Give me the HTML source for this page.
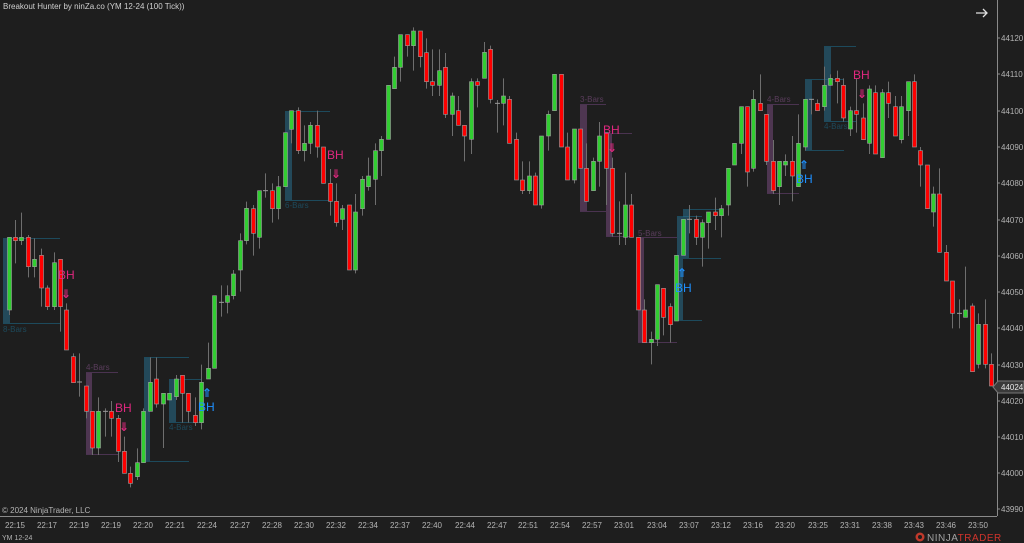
<!DOCTYPE html>
<html><head><meta charset="utf-8">
<style>
html,body{margin:0;padding:0;background:#1e1e1e;}
body{width:1024px;height:543px;overflow:hidden;position:relative;font-family:"Liberation Sans",sans-serif;}
svg{position:absolute;left:0;top:0;}
</style></head>
<body>
<svg id="c" width="1024" height="543" xmlns="http://www.w3.org/2000/svg" font-family="Liberation Sans, sans-serif">
<rect width="1024" height="543" fill="#1e1e1e"/>
<g id="ov"></g>
<g id="cd"></g>
<line x1="997.5" y1="0" x2="997.5" y2="516" stroke="#8a8a8a" stroke-width="1"/>
<line x1="0" y1="516.5" x2="997" y2="516.5" stroke="#8a8a8a" stroke-width="1"/>
<g font-size="8" fill="#b4b4b4">
<text x="1001" y="41">44120</text><text x="1001" y="77">44110</text><text x="1001" y="114">44100</text>
<text x="1001" y="150">44090</text><text x="1001" y="186">44080</text><text x="1001" y="223">44070</text>
<text x="1001" y="259">44060</text><text x="1001" y="295">44050</text><text x="1001" y="331">44040</text>
<text x="1001" y="368">44030</text><text x="1001" y="404">44020</text><text x="1001" y="440">44010</text>
<text x="1001" y="476">44000</text><text x="1001" y="512">43990</text>
</g>
<g stroke="#8a8a8a"><line x1="997" y1="38" x2="1000" y2="38"/><line x1="997" y1="74" x2="1000" y2="74"/><line x1="997" y1="111" x2="1000" y2="111"/><line x1="997" y1="147" x2="1000" y2="147"/><line x1="997" y1="183" x2="1000" y2="183"/><line x1="997" y1="220" x2="1000" y2="220"/><line x1="997" y1="256" x2="1000" y2="256"/><line x1="997" y1="292" x2="1000" y2="292"/><line x1="997" y1="328" x2="1000" y2="328"/><line x1="997" y1="365" x2="1000" y2="365"/><line x1="997" y1="401" x2="1000" y2="401"/><line x1="997" y1="437" x2="1000" y2="437"/><line x1="997" y1="473" x2="1000" y2="473"/><line x1="997" y1="509" x2="1000" y2="509"/></g>
<path d="M993 387 L998 381 L1024 381 L1024 393 L998 393 Z" fill="#3a3a3a" stroke="#777"/>
<text x="1001" y="390" font-size="8" fill="#e8e8e8">44024</text>
<g font-size="8" fill="#b4b4b4" text-anchor="middle">
<text x="15" y="528">22:15</text><text x="47" y="528">22:17</text><text x="79" y="528">22:19</text><text x="111" y="528">22:19</text><text x="143" y="528">22:20</text><text x="175" y="528">22:21</text><text x="207" y="528">22:24</text><text x="240" y="528">22:27</text><text x="272" y="528">22:28</text><text x="304" y="528">22:30</text><text x="336" y="528">22:32</text><text x="368" y="528">22:34</text><text x="400" y="528">22:37</text><text x="432" y="528">22:40</text><text x="465" y="528">22:44</text><text x="497" y="528">22:47</text><text x="528" y="528">22:51</text><text x="560" y="528">22:54</text><text x="592" y="528">22:57</text><text x="624" y="528">23:01</text><text x="657" y="528">23:04</text><text x="689" y="528">23:07</text><text x="721" y="528">23:12</text><text x="753" y="528">23:16</text><text x="785" y="528">23:20</text><text x="818" y="528">23:25</text><text x="850" y="528">23:31</text><text x="882" y="528">23:38</text><text x="914" y="528">23:43</text><text x="946" y="528">23:46</text><text x="978" y="528">23:50</text>
</g>
<text x="3" y="9" font-size="8" fill="#d0d0d0">Breakout Hunter by ninZa.co (YM 12-24 (100 Tick))</text>
<text x="2" y="513" font-size="8" fill="#b4b4b4">© 2024 NinjaTrader, LLC</text>
<text x="2" y="540" font-size="7" fill="#b4b4b4">YM 12-24</text>
<path d="M976 13 H987 M983 9 L987 13 L983 17" stroke="#e0e0e0" stroke-width="1.3" fill="none"/>
<circle cx="920" cy="537" r="4.5" fill="#c0392b"/><circle cx="920" cy="537" r="2" fill="#1e1e1e"/>
<text x="927" y="541" font-size="10" fill="#a0a0a0" letter-spacing="0.5">NINJA<tspan fill="#d0342c">TRADER</tspan></text>
<g font-size="8" fill="#1d4a5c"><text x="3" y="332">8-Bars</text><text x="169" y="430">4-Bars</text><text x="285" y="208">6-Bars</text><text x="824" y="129">4-Bars</text></g>
<g font-size="8" fill="#5a3d5c"><text x="86" y="370">4-Bars</text><text x="580" y="102">3-Bars</text><text x="638" y="236">5-Bars</text><text x="767" y="102">4-Bars</text></g>
<g font-size="12" fill="#e0287f"><text x="58" y="279">BH</text><text x="115" y="412">BH</text><text x="327" y="159">BH</text><text x="603" y="134">BH</text><text x="853" y="79">BH</text></g>
<g font-size="12" font-weight="bold" fill="#e0287f" text-anchor="middle" font-family="DejaVu Sans, sans-serif"><text x="66" y="298">⇓</text><text x="124" y="431">⇓</text><text x="336" y="178">⇓</text><text x="612" y="152">⇓</text><text x="862" y="98">⇓</text></g>
<g font-size="12" fill="#1e90ff"><text x="198" y="411">BH</text><text x="675" y="292">BH</text><text x="796" y="183">BH</text></g>
<g font-size="12" font-weight="bold" fill="#1e90ff" text-anchor="middle" font-family="DejaVu Sans, sans-serif"><text x="207" y="397">⇑</text><text x="682" y="277">⇑</text><text x="804" y="169">⇑</text></g>
</svg>
<script>
var NS="http://www.w3.org/2000/svg";
function el(p,t,a){var e=document.createElementNS(NS,t);for(var k in a)e.setAttribute(k,a[k]);p.appendChild(e);return e;}
var ov=document.getElementById('ov');
function box(x1,x2,y1,y2,xe,col,fill){el(ov,'rect',{x:x1,y:y1,width:x2-x1,height:y2-y1,fill:fill});
el(ov,'line',{x1:x1,y1:y1+0.5,x2:xe,y2:y1+0.5,stroke:col});el(ov,'line',{x1:x1,y1:y2-0.5,x2:xe,y2:y2-0.5,stroke:col});}
var T='#1d4a5c',TF='rgba(40,110,140,0.55)',P='#4a3350',PF='rgba(110,70,115,0.6)';
box(3,10,238,324,60,T,TF);box(86,92,372,455,118,P,PF);box(144,150,357,462,189,T,TF);box(169,176,379,423,201,T,TF);
box(285,292,111,201,330,T,TF);box(580,587,104,212,606,P,PF);box(606,612,133,237,632,P,PF);box(638,644,237,343,677,P,PF);
box(677,683,216,321,702,T,TF);box(683,689,209,259,721,T,TF);box(767,773,104,194,799,P,PF);box(805,812,79,151,844,T,TF);box(824,831,46,122,856,T,TF);
var D=[[0,[[26,652,870,652,885,'G'],[45,652,662,600,730,'R'],[64,652,662,578,675,'G'],[84,652,740,645,772,'R'],[103,718,740,655,772,'G'],[122,706,804,686,860,'R'],[142,804,860,796,870,'R'],[161,728,860,697,870,'G'],[180,718,860,718,935,'R'],[199,870,990,850,990,'R'],[219,1010,1088,1000,1088,'R'],[238,1086,1086,1000,1130,'D'],[257,1098,1174,1098,1195,'R'],[276,1174,1284,1174,1305,'R'],[295,1174,1284,1132,1305,'G'],[314,1174,1174,1165,1250,'D'],[334,1174,1195,1143,1250,'R'],[353,1195,1294,1185,1326,'R'],[372,1294,1360,1250,1360,'R'],[391,1360,1390,1340,1402,'R'],[411,1328,1370,1285,1380,'G'],[430,1174,1328,1165,1328,'G'],[449,1087,1174,1012,1174,'G'],[469,1077,1152,1012,1163,'R'],[488,1120,1152,1120,1284,'G'],[507,1120,1140,1120,1140,'G'],[527,1077,1130,1065,1140,'G'],[546,1066,1120,1066,1208,'R'],[565,1120,1174,1120,1208,'R'],[585,1186,1208,1132,1218,'R'],[604,1087,1208,1034,1228,'G'],[623,1045,1077,968,1077,'G'],[643,827,1045,827,1045,'G'],[662,847,847,796,890,'D'],[681,827,847,796,880,'G'],[700,762,827,750,838,'G'],[720,662,750,640,815,'G'],[739,565,662,545,673,'G']]],
[250,[[8,566,640,555,707,'R'],[27,512,652,512,686,'G'],[46,512,512,460,533,'D'],[65,512,566,490,608,'R'],[85,500,566,468,598,'G'],[104,338,500,338,500,'G'],[123,272,328,272,370,'G'],[143,272,392,262,402,'R'],[162,370,392,316,424,'G'],[181,316,370,306,402,'G'],[200,316,381,272,413,'R'],[220,381,490,381,490,'R'],[239,490,544,447,587,'R'],[258,544,608,490,620,'R'],[277,566,598,555,630,'G'],[297,555,750,555,750,'R'],[316,576,750,522,760,'G'],[335,478,566,468,587,'G'],[355,468,500,413,512,'G'],[374,392,478,370,555,'G'],[393,358,392,348,468,'G'],[413,196,358,196,358,'G'],[432,142,206,110,206,'G'],[451,44,142,44,185,'G'],[470,44,77,44,110,'R'],[490,33,77,22,152,'G'],[509,33,110,33,142,'R'],[528,98,185,55,206,'R'],[547,185,196,88,228,'R'],[567,152,196,88,228,'G'],[586,142,283,99,294,'R'],[605,228,283,218,348,'G'],[624,272,316,228,316,'R'],[643,316,348,316,424,'R'],[663,185,358,175,402,'G'],[682,185,196,175,262,'R'],[701,97,175,66,175,'G'],[720,88,238,77,250,'R'],[740,250,250,240,338,'D']]],
[500,[[9,228,250,175,316,'G'],[28,238,370,228,370,'R'],[47,358,480,338,480,'R'],[67,480,512,424,522,'R'],[86,468,512,424,522,'G'],[105,468,555,458,555,'R'],[124,348,555,348,566,'G'],[144,283,348,272,392,'G'],[163,163,272,163,272,'G'],[182,163,381,163,381,'R'],[201,381,480,338,480,'R'],[221,327,480,327,490,'G'],[240,327,445,327,445,'R'],[259,445,544,370,544,'R'],[279,424,512,413,512,'G'],[298,348,424,306,500,'G'],[317,338,445,338,555,'R'],[336,445,640,413,650,'R'],[356,640,640,544,675,'D'],[375,555,652,458,675,'G'],[394,555,652,522,652,'R'],[413,652,870,652,870,'R'],[432,870,968,838,968,'R'],[452,958,968,935,1033,'G'],[471,794,958,794,978,'G'],[490,805,892,805,946,'R'],[509,860,914,850,968,'R'],[529,706,903,706,903,'G'],[548,598,706,598,706,'G'],[567,598,598,555,640,'D'],[587,598,652,587,675,'R'],[606,608,652,598,740,'G'],[625,576,608,576,686,'G'],[645,576,587,533,630,'R'],[664,566,587,555,652,'G'],[683,445,555,445,587,'G'],[702,370,435,370,435,'G'],[722,260,370,260,402,'G'],[741,260,456,260,500,'R']]],
[750,[[10,238,445,210,455,'G'],[30,250,272,163,272,'R'],[49,283,424,283,435,'R'],[68,424,512,360,522,'R'],[87,424,500,424,555,'G'],[106,424,435,403,468,'G'],[125,424,468,348,544,'R'],[145,370,500,283,500,'G'],[164,238,381,238,392,'G'],[183,238,238,238,283,'D'],[202,250,272,238,272,'R'],[222,196,260,140,272,'G'],[241,175,196,163,196,'G'],[260,175,185,152,250,'R'],[280,196,294,175,305,'R'],[299,272,327,260,348,'G'],[318,272,283,175,338,'R'],[338,294,359,250,359,'R'],[357,207,370,196,402,'G'],[376,218,402,196,402,'R'],[396,218,413,207,413,'G'],[415,218,250,185,294,'R'],[434,260,348,228,348,'R'],[454,260,359,228,370,'G'],[473,185,272,185,348,'G'],[492,185,381,163,381,'R'],[511,392,435,381,500,'R'],[530,435,566,435,566,'R'],[549,522,576,500,620,'G'],[568,522,697,445,697,'R'],[588,697,783,675,783,'R'],[607,783,880,783,925,'R'],[626,880,880,838,925,'D'],[646,870,892,740,892,'G'],[665,858,1055,850,1055,'R'],[685,913,1033,880,1045,'G'],[704,913,1033,838,1045,'R'],[723,1033,1098,1000,1098,'R']]]];
var cd=document.getElementById('cd');
D.forEach(function(s){var o=s[0];s[1].forEach(function(c){
var x=Math.round(o+c[0]/3)+0.5,bt=20+c[1]/3,bb=20+c[2]/3,wt=20+c[3]/3,wb=20+c[4]/3;
el(cd,'line',{x1:x,y1:wt,x2:x,y2:wb,stroke:'#6e6e6e','stroke-width':1});
if(c[5]=='D'){el(cd,'line',{x1:x-2.5,y1:bt,x2:x+2.5,y2:bt,stroke:'#9a9a9a'});}
else{var h=Math.max(bb-bt,2);el(cd,'rect',{x:x-2,y:bt,width:4,height:h,fill:c[5]=='G'?'#32cd32':'#ff0000',stroke:'#a0a0a0','stroke-width':0.6});}
});});
</script>
</body></html>
